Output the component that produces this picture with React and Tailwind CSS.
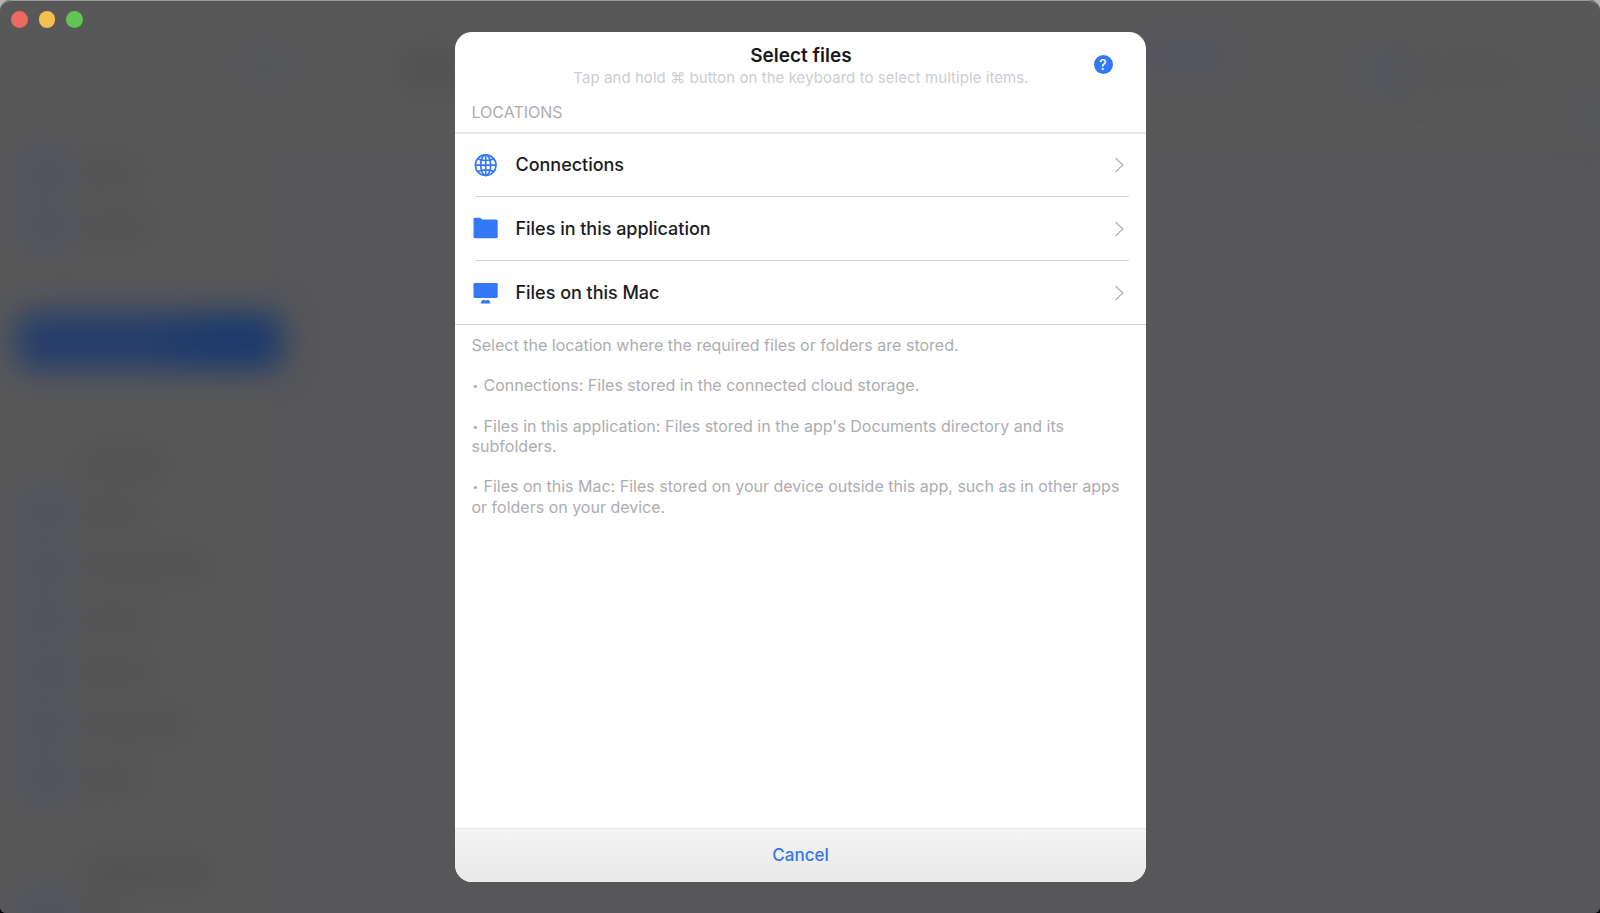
const BLUE = '#3478f6';

function GlobeIcon() {
  return (
    <svg className="h-[25px] w-[25px]" viewBox="0 0 25 25" fill="none" stroke={BLUE} strokeWidth="1.7">
      <circle cx="12.7" cy="12.2" r="10.3" />
      <ellipse cx="12.7" cy="12.2" rx="5" ry="10.3" />
      <path d="M12.7 1.900v20.600M2.400 12.200h20.600M4.600 5.900q8.100 3.200 16.200 0M4.600 18.500q8.100-3.200 16.200 0" />
    </svg>
  );
}

function FolderIcon() {
  return (
    <svg className="h-[25px] w-[25px]" viewBox="0 0 25 25" fill={BLUE}>
      <path d="M.5 3.200Q.5 1.800 2 1.800h4.700q.8 0 1.300.5l.6.600q.5.500 1.300.5h13.300q1.500 0 1.500 1.500v15.800q0 1.500-1.500 1.500H2Q.5 22.200.5 20.700Z" />
    </svg>
  );
}

function DisplayIcon() {
  return (
    <svg className="h-[25px] w-[25px]" viewBox="0 0 25 25" fill={BLUE}>
      <rect x=".5" y="3" width="24.200" height="15" rx="1.400" />
      <path d="M9.700 20h1.500q.6 0 1.100.6.3.3.6 0 .5-.6 1.100-.6h1.500q.5 0 .7.400l1.200 2.200q.4.900-.5.900H8.300q-.9 0-.5-.9L9 20.400q.2-.4.700-.4Z" />
    </svg>
  );
}

function Chevron() {
  return (
    <svg className="h-[16px] w-[9px]" viewBox="0 0 9 16" fill="none" stroke="#b4b4b6" strokeWidth="1.400" strokeLinecap="round" strokeLinejoin="round">
      <path d="M1 1.400 7.700 8 1 14.600" />
    </svg>
  );
}

function HelpIcon() {
  return (
    <span className="absolute top-[23.400px] right-[33px] flex h-[19px] w-[19px] items-center justify-center rounded-full bg-[#3478f6] text-[14px] leading-none font-medium text-white">
      ?
    </span>
  );
}

const LOCATIONS = [
  { label: 'Connections', Icon: GlobeIcon, height: 'h-[62px]' },
  { label: 'Files in this application', Icon: FolderIcon, height: 'h-[63px]' },
  { label: 'Files on this Mac', Icon: DisplayIcon, height: 'h-[63px]' },
];

function Bullet() {
  return <span className="inline-block w-[12px] pl-[1px] align-[2px] text-[10px] leading-none">•</span>;
}

function SidebarRow({ label }) {
  return (
    <div className="flex h-[53px] items-center gap-3 pl-[24px]">
      <div className="h-[38px] w-[42px] bg-[#4e5362]" />
      <div className={`h-[26px] bg-[#525253] ${label}`} />
    </div>
  );
}

function Backdrop() {
  return (
    <div className="absolute inset-0 flex overflow-hidden">
      <div className="w-[268px] shrink-0 bg-[#585859]">
        <div className="pt-[146px] blur-[15px]">
          <SidebarRow label="w-[60px]" />
          <SidebarRow label="w-[74px]" />
        </div>
        <div className="mt-[60px] ml-[15px] flex h-[58px] w-[268px] rounded-[18px] bg-linear-to-r from-[#243d6c] via-[#243d6c] to-[#1a396c] to-75% blur-[16px]" />
        <div className="mt-[70px] blur-[15px]">
          <div className="ml-[80px] h-[46px] pt-[10px]">
            <div className="h-[26px] w-[82px] bg-[#515151]" />
          </div>
          <SidebarRow label="w-[68px]" />
          <SidebarRow label="w-[130px]" />
          <SidebarRow label="w-[72px]" />
          <SidebarRow label="w-[74px]" />
          <SidebarRow label="w-[108px]" />
          <SidebarRow label="w-[64px]" />
          <div className="mt-[54px] ml-[84px] h-[28px] w-[124px] bg-[#515151]" />
          <SidebarRow label="w-[48px]" />
        </div>
      </div>
      <div className="flex grow flex-col bg-[#575759]">
        <div className="flex h-[148px] items-start bg-[#585859] pt-[50px]">
          <div className="-ml-[26px] h-[30px] w-[44px] bg-[#54565d] blur-[14px]" />
          <div className="ml-[118px] h-[38px] w-[56px] bg-[#515152] blur-[14px]" />
          <div className="-mt-[20px] ml-[680px] h-[52px] w-[90px] bg-[#55565c] blur-[14px]" />
          <div className="ml-[130px] h-[44px] w-[48px] bg-[#54565d] blur-[14px]" />
          <div className="ml-[10px] h-[40px] w-[110px] bg-[#565657] blur-[14px]" />
          <div className="mt-[46px] ml-[46px] h-[36px] w-[46px] bg-[#55575c] blur-[14px]" />
        </div>
      </div>
    </div>
  );
}

function TrafficLights() {
  return (
    <div className="absolute top-[11px] left-[11px] flex gap-[11px]">
      <span className="h-[16.500px] w-[16.500px] rounded-full bg-[#ec6a5f]" />
      <span className="h-[16.500px] w-[16.500px] rounded-full bg-[#f5bf4f]" />
      <span className="h-[16.500px] w-[16.500px] rounded-full bg-[#61c554]" />
    </div>
  );
}

function SelectFilesDialog() {
  return (
    <section className="relative flex h-[850px] w-[691px] flex-col overflow-hidden rounded-[17px] bg-white">
      <header className="relative flex h-[100px] flex-col">
        <h1 className="mt-[12px] pl-[2px] text-center text-[19px] leading-[24px] font-semibold text-[#1a1a1b]">Select files</h1>
        <p className="pl-[2px] text-center text-[15px] leading-[20px] tracking-[0.065px] text-[#cdcdcf]">
          Tap and hold ⌘ button on the keyboard to select multiple items.
        </p>
        <h2 className="mt-[14px] pl-[17px] text-[16px] leading-[20px] text-[#adadaf]">LOCATIONS</h2>
        <HelpIcon />
      </header>
      <ul className="flex flex-col border-t-2 border-b border-t-[#e8e8e9] border-b-[#d4d4d5]">
        {LOCATIONS.map(({ label, Icon, height }, i) => (
          <li key={label} className="pr-[17px] pl-[18px]">
            <div className={`flex items-center pr-[5px] ${height}`}>
              <span className="flex w-[25px] shrink-0">
                <Icon />
              </span>
              <span className="ml-[18px] grow text-[18px] leading-[24px] font-medium tracking-[-0.020px] text-[#1c1c1e]">{label}</span>
              <Chevron />
            </div>
            {i < LOCATIONS.length - 1 && <div className="ml-[3px] h-px bg-[#d1d1d3]" />}
          </li>
        ))}
      </ul>
      <div className="grow pt-[10px] pr-[18px] pl-[17px] text-[16px] leading-[20.200px] text-[#adadaf]">
        <p className="tracking-[0.010px]">Select the location where the required files or folders are stored.</p>
        <p className="mt-[20.200px]"><Bullet />Connections: Files stored in the connected cloud storage.</p>
        <p className="mt-[20.200px] tracking-[0.030px]">
          <Bullet />Files in this application: Files stored in the app's Documents directory and its
          <br />
          subfolders.
        </p>
        <p className="mt-[20.200px]">
          <Bullet />Files on this Mac: Files stored on your device outside this app, such as in other apps
          <br />
          or folders on your device.
        </p>
      </div>
      <footer className="flex h-[54px] items-center justify-center border-t border-[#e6e6e6] bg-linear-to-b from-[#f4f4f4] to-[#e9e9e9] pb-[1px]">
        <button className="pl-[1px] text-[17px] leading-[24px] font-medium text-[#3577e6]">Cancel</button>
      </footer>
    </section>
  );
}

export default function App() {
  return (
    <main className="h-[913px] w-[1600px] overflow-hidden bg-linear-to-b from-[#b5b5b7] from-10% to-black to-90% font-['Inter',sans-serif]">
      <div className="relative h-full w-full overflow-hidden rounded-t-[11px] rounded-b-[6px] bg-[#575759]">
        <Backdrop />
        <div className="absolute inset-0 rounded-t-[11px] border-t border-[#98999b]" />
        <TrafficLights />
        <div className="relative flex justify-center pt-[32px]">
          <SelectFilesDialog />
        </div>
      </div>
    </main>
  );
}
